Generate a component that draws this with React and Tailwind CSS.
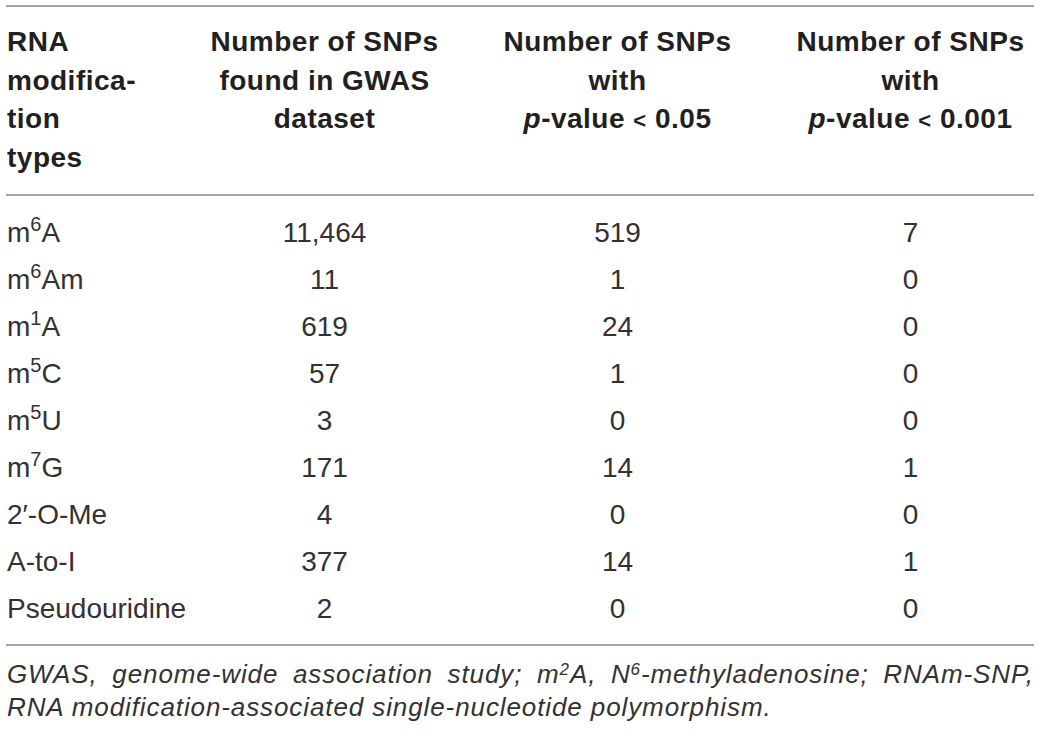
import React from "react";

// table rows: type label, snps in gwas, p<0.05, p<0.001
const rows = [
  { type: ["m", "6", "A"], gwas: "11,464", p05: "519", p001: "7" },
  { type: ["m", "6", "Am"], gwas: "11", p05: "1", p001: "0" },
  { type: ["m", "1", "A"], gwas: "619", p05: "24", p001: "0" },
  { type: ["m", "5", "C"], gwas: "57", p05: "1", p001: "0" },
  { type: ["m", "5", "U"], gwas: "3", p05: "0", p001: "0" },
  { type: ["m", "7", "G"], gwas: "171", p05: "14", p001: "1" },
  { type: ["2′-O-Me"], gwas: "4", p05: "0", p001: "0" },
  { type: ["A-to-I"], gwas: "377", p05: "14", p001: "1" },
  { type: ["Pseudouridine"], gwas: "2", p05: "0", p001: "0" },
];

const TypeLabel = ({ parts }) => {
  if (parts.length === 1) return <>{parts[0]}</>;
  return (
    <>
      {parts[0]}
      <sup className="text-[20px] top-[-0.55em]">{parts[1]}</sup>
      {parts[2]}
    </>
  );
};

const PValue = ({ value }) => (
  <>
    <i>p</i>-value <span className="text-[22px]">&lt;</span> {value}
  </>
);

const App = () => {
  return (
    <div className="w-[1040px] h-[736px] bg-white pt-[5px] px-[6px] text-[#231f20] font-['Liberation_Sans',Arial,sans-serif]">
      <div className="border-t-2 border-b-2 border-[#a4a4a4]">
        {/* header */}
        <div className="grid grid-cols-[172px_293px_293px_271px] pt-[16px] pb-[17px] border-b-2 border-[#a4a4a4] font-bold text-[28px] leading-[38.5px] tracking-[0.5px]">
          <div className="pl-px">
            RNA
            <br />
            modifica-
            <br />
            tion
            <br />
            types
          </div>
          <div className="text-center">
            Number of SNPs
            <br />
            found in GWAS
            <br />
            dataset
          </div>
          <div className="text-center">
            Number of SNPs
            <br />
            with
            <br />
            <PValue value="0.05" />
          </div>
          <div className="text-center pl-[22px]">
            Number of SNPs
            <br />
            with
            <br />
            <PValue value="0.001" />
          </div>
        </div>

        {/* body */}
        <div className="pt-[13px] pb-[12px] text-[28px] leading-[47px] text-[#333132]">
          {rows.map((r, i) => (
            <div key={i} className="grid grid-cols-[172px_293px_293px_271px]">
              <div className="pl-px whitespace-nowrap">
                <TypeLabel parts={r.type} />
              </div>
              <div className="text-center">{r.gwas}</div>
              <div className="text-center">{r.p05}</div>
              <div className="text-center pl-[22px]">{r.p001}</div>
            </div>
          ))}
        </div>
      </div>

      {/* footnote */}
      <div className="mt-[12px] pl-px italic text-[26px] leading-[33px] tracking-[0.9px] text-[#333132]">
        <p className="text-justify [text-align-last:justify]">
          GWAS, genome-wide association study; m<sup className="text-[17px]">2</sup>A, N
          <sup className="text-[17px]">6</sup>-methyladenosine; RNAm-SNP,
        </p>
        <p>RNA modification-associated single-nucleotide polymorphism.</p>
      </div>
    </div>
  );
};

export default App;
